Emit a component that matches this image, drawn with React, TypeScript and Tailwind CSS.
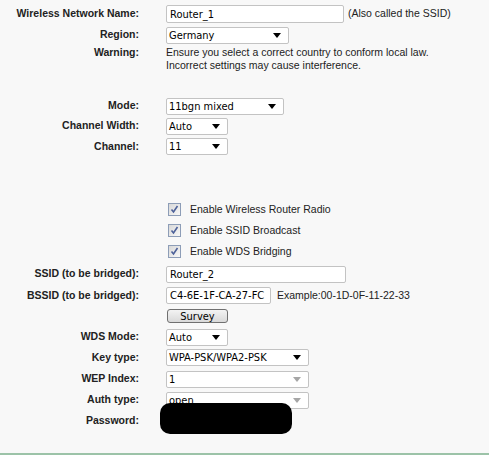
import React from "react";

const LABEL = "w-[139px] shrink-0 text-right font-bold text-[10.5px] text-[#222]";
const FIELD = "font-['DejaVu_Sans_Condensed','Liberation_Sans',sans-serif] text-[11px] text-black whitespace-nowrap";
const TEXT = "text-[10.5px] text-[#222] whitespace-nowrap";
const BOX = "flex items-center overflow-hidden bg-white border border-[#c3c3c3] rounded-[2px]";

function Row({
  label, h, children, className = "",
}: {
  label?: string;
  h: string;
  children?: React.ReactNode;
  className?: string;
}) {
  return (
    <div className={`flex items-center ${h} ${className}`}>
      <div className={LABEL}>{label}</div>
      <div className="ml-[27px] flex items-center">{children}</div>
    </div>
  );
}

function Select({ value, w, disabled }: { value: string; w: string; disabled?: boolean }) {
  return (
    <div className={`${BOX} ${w} h-[17px] pl-[2px] pr-[7px] justify-between ${FIELD}`}>
      <span className="leading-none">{value}</span>
      <svg width="8" height="5" viewBox="0 0 8 5">
        <path d="M0 0h8L4 5z" fill={disabled ? "#a6a6a6" : "#000"} />
      </svg>
    </div>
  );
}

function TextBox({ value, w, h = "h-[17px]" }: { value: string; w: string; h?: string }) {
  return (
    <div className={`${BOX} ${w} ${h} px-[3px] ${FIELD}`}>
      <span className="leading-none">{value}</span>
    </div>
  );
}

function Check({ label }: { label: string }) {
  return (
    <div className="flex items-center h-[21px] pl-[168px]">
      <span className="flex h-[13px] w-[13px] items-center justify-center border border-[#8d9db7] bg-gradient-to-br from-[#d8d8d8] to-[#f8f8f8]">
        <svg width="9" height="9" viewBox="0 0 9 9">
          <path d="M1.5 4.5l2 2.5 4-6" fill="none" stroke="#4d6199" strokeWidth="1.6" />
        </svg>
      </span>
      <span className={`ml-[9px] ${TEXT}`}>{label}</span>
    </div>
  );
}

export default function App() {
  return (
    <div className="w-[489px] h-[456px] bg-[#f8f8f8] font-['Liberation_Sans',Arial,sans-serif] flex flex-col">
      <Row label="Wireless Network Name:" h="h-[20px]" className="mt-[4px]">
        <TextBox value="Router_1" w="w-[178px]" h="h-[18px]" />
        <span className={`ml-[4px] ${TEXT}`}>(Also called the SSID)</span>
      </Row>
      <Row label="Region:" h="h-[22px]">
        <Select value="Germany" w="w-[123px]" />
      </Row>
      <div className="flex items-start leading-[13px]">
        <div className={LABEL}>Warning:</div>
        <div className={`ml-[27px] ${TEXT}`}>
          <div>Ensure you select a correct country to conform local law.</div>
          <div>Incorrect settings may cause interference.</div>
        </div>
      </div>

      <div className="h-[24px]" />
      <Row label="Mode:" h="h-[20px]">
        <Select value="11bgn mixed" w="w-[118px]" />
      </Row>
      <Row label="Channel Width:" h="h-[20px]">
        <Select value="Auto" w="w-[62px]" />
      </Row>
      <Row label="Channel:" h="h-[21px]">
        <Select value="11" w="w-[62px]" />
      </Row>

      <div className="h-[42px]" />
      <Check label="Enable Wireless Router Radio" />
      <Check label="Enable SSID Broadcast" />
      <Check label="Enable WDS Bridging" />

      <Row label="SSID (to be bridged):" h="h-[24px]">
        <TextBox value="Router_2" w="w-[180px]" />
      </Row>
      <Row label="BSSID (to be bridged):" h="h-[19px]">
        <TextBox value="C4-6E-1F-CA-27-FC" w="w-[105px]" />
        <span className={`ml-[6px] ${TEXT}`}>Example:00-1D-0F-11-22-33</span>
      </Row>
      <Row h="h-[22px]">
        <button
          className={`ml-[1px] h-[14px] w-[61px] rounded-[3px] border border-[#707070] bg-gradient-to-b from-[#f3f3f3] to-[#d9d9d9] leading-none ${FIELD}`}
        >
          Survey
        </button>
      </Row>
      <Row label="WDS Mode:" h="h-[20px]">
        <Select value="Auto" w="w-[62px]" />
      </Row>
      <Row label="Key type:" h="h-[21px]">
        <Select value="WPA-PSK/WPA2-PSK" w="w-[143px]" />
      </Row>
      <Row label="WEP Index:" h="h-[22px]">
        <Select value="1" w="w-[143px]" disabled />
      </Row>
      <Row label="Auth type:" h="h-[20px]">
        <Select value="open" w="w-[143px]" disabled />
      </Row>
      <div className="relative">
        <Row label="Password:" h="h-[22px]" />
        <div className="absolute left-[160px] top-[-7px] h-[31px] w-[132px] rounded-[10px] bg-black" />
      </div>

      <div className="flex-1" />
      <div className="h-[2px] bg-[#9cc3a8]" />
      <div className="h-[1px] bg-white" />
    </div>
  );
}
